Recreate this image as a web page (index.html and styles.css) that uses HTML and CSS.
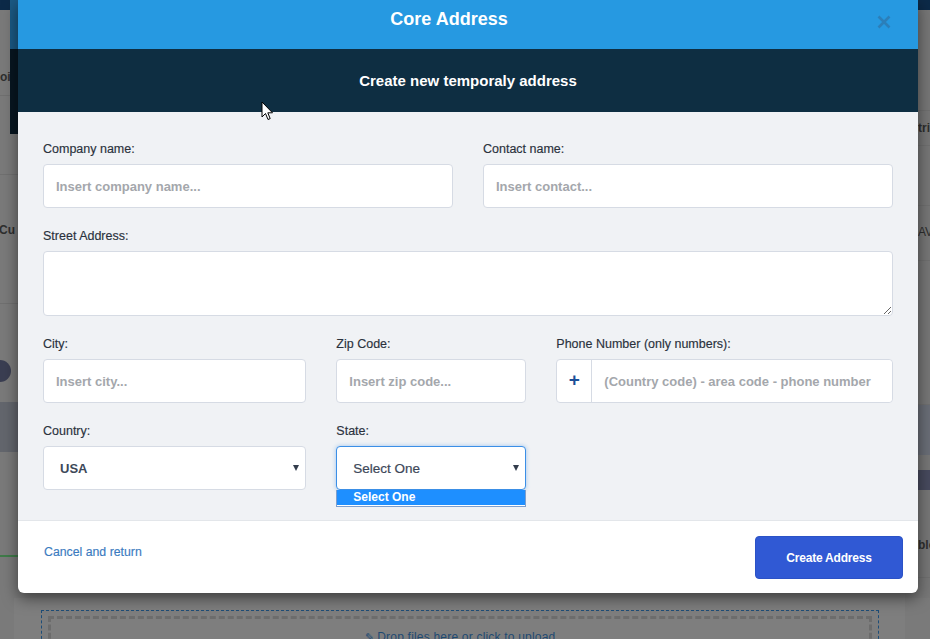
FILE: index.html
```html
<!DOCTYPE html>
<html lang="en">
<head>
<meta charset="utf-8">
<title>Core Address</title>
<link rel="stylesheet" href="styles.css">
</head>
<body>
<div class="page">
  <div class="bg-top"></div>
  <div class="bg-main">
    <div class="bg-left">
      <div class="bl bl-1"><span class="bg-text">oi</span></div>
      <div class="bl bl-2"></div>
      <div class="bl bl-3"><span class="bg-text">Cu</span></div>
      <div class="bl bl-4"><span class="bg-pill"></span></div>
      <div class="bl bl-5"></div>
      <div class="bl bl-6"></div>
    </div>
    <div class="bg-right">
      <div class="br br-1"></div>
      <div class="br br-2"><span class="bg-text">trib</span></div>
      <div class="br br-3"></div>
      <div class="br br-4"><span class="bg-text">AV</span></div>
      <div class="br br-5"></div>
      <div class="br br-6"></div>
      <div class="br br-7"></div>
      <div class="br br-8"></div>
      <div class="br br-9"><span class="bg-text">ble</span></div>
    </div>
  </div>
  <div class="bg-panel">
    <div class="dropzone">
      <div class="dz-inner"><span class="dz-icon">&#9998;</span> Drop files here or click to upload</div>
    </div>
  </div>
</div>

<div class="back-modal"></div>

<div class="modal">
  <div class="modal-header">
    <h1 class="modal-title">Core Address</h1>
    <button class="modal-close" type="button" aria-label="Close">
      <svg width="16" height="16" viewBox="0 0 16 16"><path d="M2.5 2.5 L13.5 13.5 M13.5 2.5 L2.5 13.5" stroke="#2b7fb9" stroke-width="2.6" stroke-linecap="butt"/></svg>
    </button>
  </div>
  <div class="modal-sub">Create new temporaly address</div>
  <form class="modal-body">
    <div class="grid">
      <div class="field span-6">
        <label class="lbl">Company name:</label>
        <input class="ctl" type="text" placeholder="Insert company name...">
      </div>
      <div class="field span-6">
        <label class="lbl">Contact name:</label>
        <input class="ctl" type="text" placeholder="Insert contact...">
      </div>
      <div class="field span-12">
        <label class="lbl">Street Address:</label>
        <textarea class="ctl area"></textarea>
      </div>
      <div class="field span-4">
        <label class="lbl">City:</label>
        <input class="ctl" type="text" placeholder="Insert city...">
      </div>
      <div class="field span-3">
        <label class="lbl">Zip Code:</label>
        <input class="ctl" type="text" placeholder="Insert zip code...">
      </div>
      <div class="field span-5">
        <label class="lbl">Phone Number (only numbers):</label>
        <div class="input-group">
          <span class="addon">+</span>
          <input class="ctl plain" type="text" placeholder="(Country code) - area code - phone number">
        </div>
      </div>
      <div class="field span-4">
        <label class="lbl">Country:</label>
        <div class="select">
          <span class="select-val bold">USA</span>
          <span class="caret"></span>
        </div>
      </div>
      <div class="field span-3">
        <label class="lbl">State:</label>
        <div class="select focused">
          <span class="select-val">Select One</span>
          <span class="caret"></span>
          <div class="select-list">
            <div class="opt">Select One</div>
          </div>
        </div>
      </div>
    </div>
  </form>
  <div class="modal-footer">
    <a class="cancel" href="#">Cancel and return</a>
    <button class="btn-primary" type="button">Create Address</button>
  </div>
</div>

<svg class="cursor" width="13" height="20" viewBox="0 0 13 20"><path d="M1 1 L1 16 L4.5 12.5 L7 18.5 L9.2 17.6 L6.8 11.8 L11.5 11.8 Z" fill="#fff" stroke="#000" stroke-width="1"/></svg>
</body>
</html>
```

FILE: styles.css
```css
* { box-sizing: border-box; }
html, body { margin: 0; padding: 0; }
body {
  width: 930px;
  height: 639px;
  overflow: hidden;
  position: relative;
  font-family: "Liberation Sans", Arial, sans-serif;
  background: #7b7b7b;
}

/* ---------- dimmed background page ---------- */
.page {
  display: flex;
  flex-direction: column;
  height: 639px;
  background: #7a7a7a;
}
.bg-top { height: 10px; background: #0c2a48; flex: none; }
.bg-main {
  display: flex;
  justify-content: space-between;
  height: 588px;
  flex: none;
}
.bg-left { width: 18px; display: flex; flex-direction: column; }
.bg-right { width: 25px; display: flex; flex-direction: column; background: #777; }
.bl, .br { flex: none; overflow: hidden; white-space: nowrap; border-bottom: 1px solid #707070; }
.bg-text { font-size: 12px; line-height: 15px; font-weight: 700; color: #2e2e2e; display: block; }

.bl-1 { height: 86px; padding-top: 60px; }
.bl-2 { height: 79px; }
.bl-3 { height: 129px; padding-top: 48px; }
.bl-3 .bg-text { margin-left: -1px; }
.bl-4 { height: 98px; padding-top: 56px; position: relative; border-bottom: none; }
.bg-pill { display: block; width: 22px; height: 22px; border-radius: 11px; background: #3a3e52; margin-left: -11px; }
.bl-5 { height: 50px; background: #63666d; border-bottom: none; }
.bl-6 { height: 105px; border-bottom: 2px solid #3f7b49; }

.br-1 { height: 101px; }
.br-2 { height: 35px; padding-top: 10px; padding-left: 13px; }
.br-3 { height: 60px; }
.br-4 { height: 55px; padding-top: 19px; padding-left: 13px; }
.br-4 .bg-text { font-weight: 400; }
.br-5 { height: 144px; }
.br-6 { height: 50px; background: #6a6e77; border-bottom: none; }
.br-7 { height: 15px; border-bottom: none; }
.br-8 { height: 20px; background: #474a5e; border-bottom: none; }
.br-9 { height: 88px; padding-top: 48px; padding-left: 13px; }

.bg-panel {
  flex: 1;
  margin: 0 25px 0 14px;
  background: #7e7e7e;
  padding: 12px 26px 0 27px;
}
.dropzone {
  height: 60px;
  border: 1px dashed #1d4d78;
  padding: 5px 6px;
}
.dz-inner {
  height: 100%;
  border: 3px dashed #6c6c6c;
  text-align: center;
  padding-top: 11px;
  font-size: 12px;
  line-height: 14px;
  color: #1e4a72;
  letter-spacing: 0.2px;
}
.dz-icon { font-size: 11px; }

.back-modal {
  position: absolute;
  left: 10px;
  top: 0;
  width: 10px;
  height: 134px;
  background: linear-gradient(#1b5a85 0, #1b5a85 49px, #071621 49px, #071621 134px);
}

/* ---------- modal ---------- */
.modal {
  position: absolute;
  left: 18px;
  top: 0;
  width: 900px;
  background: #fff;
  border-radius: 0 0 6px 6px;
  box-shadow: 0 5px 15px rgba(0, 0, 0, 0.5);
}
.modal-header {
  height: 49px;
  background: #2699e1;
  display: flex;
  align-items: flex-start;
  padding: 9px 15px 0 15px;
}
.modal-title {
  flex: 1;
  margin: 0;
  text-align: center;
  color: #fff;
  font-size: 18px;
  line-height: 20px;
  font-weight: 700;
}
.modal-close {
  width: 38px;
  height: 30px;
  margin-top: -2px;
  border: 0;
  padding: 0;
  background: transparent;
  display: flex;
  align-items: center;
  justify-content: center;
}
.modal-close svg { display: block; }
.modal-sub {
  height: 63px;
  background: #0e2e42;
  color: #fff;
  font-size: 15px;
  font-weight: 700;
  display: flex;
  align-items: center;
  justify-content: center;
}
.modal-body {
  margin: 0;
  background: #f0f2f5;
  padding: 30px 25px 30px 25px;
  border-bottom: 1px solid #e3e6ea;
}
.grid {
  display: grid;
  grid-template-columns: repeat(12, 1fr);
  column-gap: 30px;
  row-gap: 21px;
}
.span-12 { grid-column: span 12; }
.span-6 { grid-column: span 6; }
.span-5 { grid-column: span 5; }
.span-4 { grid-column: span 4; }
.span-3 { grid-column: span 3; }
.field { display: flex; flex-direction: column; min-width: 0; }
.lbl {
  font-size: 12.5px;
  line-height: 15px;
  color: #2a313c;
  margin-bottom: 7px;
  -webkit-text-stroke: 0.15px #2a313c;
}
.ctl {
  height: 44px;
  width: 100%;
  border: 1px solid #d6dbe4;
  border-radius: 4px;
  background: #fff;
  padding: 0 12px;
  font-family: "Liberation Sans", Arial, sans-serif;
  font-size: 13px;
  color: #3a4556;
  outline: none;
}
.ctl::placeholder { color: #a4a7ac; font-weight: 700; opacity: 1; }
.area { height: 65px; resize: vertical; display: block; padding: 10px 12px; }

.input-group {
  display: flex;
  height: 44px;
  border: 1px solid #d6dbe4;
  border-radius: 4px;
  background: #fff;
}
.addon {
  width: 35px;
  flex: none;
  border-right: 1px solid #d6dbe4;
  display: flex;
  align-items: center;
  justify-content: center;
  color: #1d4f98;
  font-size: 19px;
  font-weight: 700;
  padding-bottom: 3px;
}
.ctl.plain { border: 0; height: 42px; border-radius: 0 4px 4px 0; padding-left: 12px; min-width: 0; }

.select {
  position: relative;
  height: 44px;
  border: 1px solid #d6dbe4;
  border-radius: 4px;
  background: #fff;
  display: flex;
  align-items: center;
  padding: 0 16px;
}
.select-val { font-size: 13.5px; color: #3d4859; -webkit-text-stroke: 0.2px #3d4859; }
.select-val.bold { font-weight: 700; font-size: 13px; -webkit-text-stroke: 0; }
.caret {
  position: absolute;
  right: 6px;
  top: 18px;
  width: 0;
  height: 0;
  border-left: 3.5px solid transparent;
  border-right: 3.5px solid transparent;
  border-top: 6px solid #333d4c;
}
.select.focused {
  border-color: #3b8fe6;
  box-shadow: 0 0 4px rgba(59, 143, 230, 0.45);
}
.select-list {
  position: absolute;
  left: -1px;
  right: -1px;
  top: 43px;
  background: #fff;
  border: 1px solid #7e9fcd;
  border-top: 0;
  padding-bottom: 1px;
}
.opt {
  height: 15px;
  line-height: 15px;
  background: #1e8fff;
  color: #fff;
  font-size: 12px;
  font-weight: 700;
  padding-left: 16px;
}

.modal-footer {
  height: 72px;
  display: flex;
  justify-content: space-between;
  align-items: flex-start;
  padding: 15px 15px 0 26px;
}
.cancel {
  margin-top: 9px;
  font-size: 12.3px;
  line-height: 15px;
  color: #3b7bbf;
  text-decoration: none;
  -webkit-text-stroke: 0.15px #3b7bbf;
}
.btn-primary {
  width: 148px;
  height: 43px;
  background: #3059d4;
  border: 1px solid #2b52c6;
  border-radius: 4px;
  color: #fff;
  font-family: "Liberation Sans", Arial, sans-serif;
  font-size: 12px;
  font-weight: 700;
  letter-spacing: -0.2px;
  padding: 0;
}

.cursor {
  position: absolute;
  left: 261px;
  top: 101px;
}
```
